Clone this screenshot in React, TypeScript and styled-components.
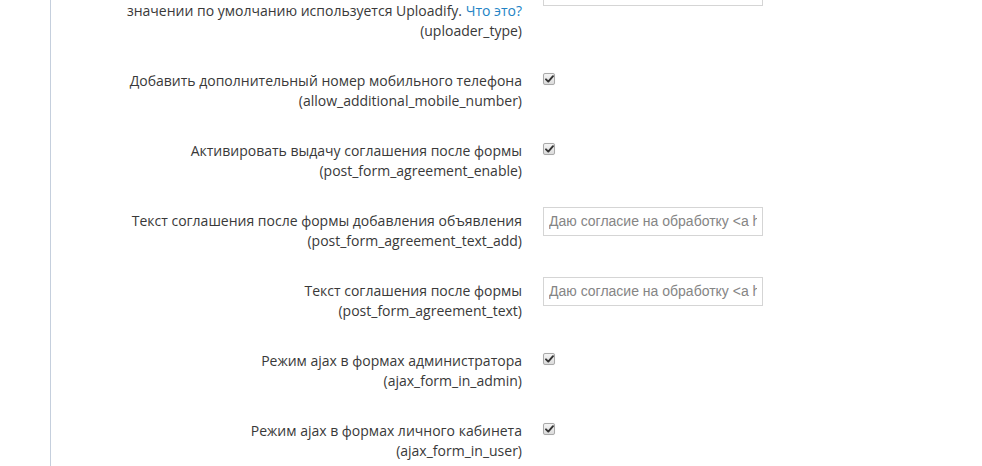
import styled, { createGlobalStyle } from "styled-components";

const GlobalStyle = createGlobalStyle`
  html, body {
    margin: 0;
    padding: 0;
    background: #fff;
    overflow: hidden;
  }
  body {
    font-family: "Open Sans", "Liberation Sans", sans-serif;
    font-size: 14px;
    color: #393939;
  }
`;

const Layout = styled.div`
  display: flex;
  height: 466px;
  overflow: hidden;
`;

const Sidebar = styled.div`
  width: 50px;
  flex: 0 0 50px;
  border-right: 1px solid #c5cfdd;
`;

const Main = styled.div`
  flex: 1 1 auto;
`;

const Form = styled.form`
  margin-top: -23px;
  display: grid;
  grid-template-columns: 471px 220px;
  column-gap: 21px;
  row-gap: 26px;
  align-items: start;
`;

const Label = styled.label<{ $top?: number }>`
  padding-top: ${(p) => p.$top ?? 4}px;
  text-align: right;
  line-height: 20px;
`;

const Key = styled.span`
  display: block;
`;

const Link = styled.a`
  color: #2283c5;
  text-decoration: none;
`;

const Control = styled.div<{ $check?: boolean }>`
  padding-top: ${(p) => (p.$check ? "6px" : "0")};
`;

const Input = styled.input`
  box-sizing: border-box;
  width: 220px;
  height: 29px;
  margin: 0;
  padding: 4px 5px 5px;
  border: 1px solid #d5d5d5;
  border-radius: 0;
  font-family: "Liberation Sans", Arial, sans-serif;
  font-size: 14px;
  color: #858585;
  background: #fff;
  outline: none;
`;

const Check = styled.span`
  box-sizing: border-box;
  display: flex;
  align-items: center;
  justify-content: center;
  width: 12px;
  height: 12px;
  border: 1px solid #a9a9a9;
  border-radius: 2px;
  background: linear-gradient(#f4f4f4, #dcdcdc);
  box-shadow: 0 0 1px rgba(0, 0, 0, 0.15);
`;

function Checkbox() {
  return (
    <Check>
      <svg width="9" height="8" viewBox="0 0 9 8">
        <path d="M1 4.3 L3.3 6.6 L8 1.2" fill="none" stroke="#333" strokeWidth="1.9" strokeLinecap="round" strokeLinejoin="round" />
      </svg>
    </Check>
  );
}

const agreement = 'Даю согласие на обработку <a href="/page/agreement">персональных данных</a>';

type Row = {
  title: string;
  key: string;
  kind: "check" | "text";
};

const rows: Row[] = [
  { title: "Добавить дополнительный номер мобильного телефона", key: "allow_additional_mobile_number", kind: "check" },
  { title: "Активировать выдачу соглашения после формы", key: "post_form_agreement_enable", kind: "check" },
  { title: "Текст соглашения после формы добавления объявления", key: "post_form_agreement_text_add", kind: "text" },
  { title: "Текст соглашения после формы", key: "post_form_agreement_text", kind: "text" },
  { title: "Режим ajax в формах администратора", key: "ajax_form_in_admin", kind: "check" },
  { title: "Режим ajax в формах личного кабинета", key: "ajax_form_in_user", kind: "check" },
];

export default function App() {
  return (
    <>
      <GlobalStyle />
      <Layout>
        <Sidebar />
        <Main>
          <Form>
            <Label $top={24}>
              значении по умолчанию используется Uploadify. <Link href="#">Что это?</Link>
              <Key>(uploader_type)</Key>
            </Label>
            <Control>
              <Input readOnly value="" />
            </Control>

            {rows.map((r) => (
              <>
                <Label key={r.key + "-l"}>
                  {r.title}
                  <Key>({r.key})</Key>
                </Label>
                <Control key={r.key + "-c"} $check={r.kind === "check"}>
                  {r.kind === "check" ? <Checkbox /> : <Input readOnly value={agreement} />}
                </Control>
              </>
            ))}
          </Form>
        </Main>
      </Layout>
    </>
  );
}
